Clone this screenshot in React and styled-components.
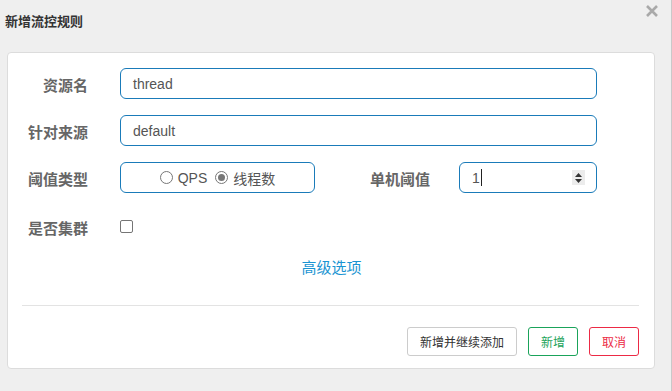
import React from 'react'
import styled, { createGlobalStyle } from 'styled-components'

const GlobalStyle = createGlobalStyle`
  html, body {
    margin: 0;
    padding: 0;
    background: #efefef;
  }
  body {
    font-family: "Liberation Sans", "Noto Sans CJK SC", sans-serif;
  }
`

const Page = styled.div`
  width: 671px;
  height: 391px;
  background: #efefef;
  border-right: 1px solid #c9c9c9;
  position: relative;
  overflow: hidden;
`

const Header = styled.div`
  height: 52px;
  display: flex;
  align-items: center;
  padding: 0 5px;
  box-sizing: border-box;
`

const Title = styled.h4`
  margin: 0;
  margin-top: -11px;
  font-size: 13px;
  font-weight: bold;
  color: #333;
`

const Close = styled.button`
  position: absolute;
  top: 4px;
  right: 12px;
  width: 14px;
  height: 14px;
  padding: 0;
  border: 0;
  background: none;
  display: flex;
  align-items: center;
  justify-content: center;
`

const Panel = styled.div`
  margin: 0 16px 0 7px;
  background: #fff;
  border: 1px solid #dcdcdc;
  border-radius: 4px;
  padding: 15px 15px 14px 14px;
  height: 317px;
  box-sizing: border-box;
  display: flex;
  flex-direction: column;
`

const Form = styled.div`
  display: flex;
  flex-direction: column;
  gap: 16px;
`

const Row = styled.div`
  display: flex;
  align-items: flex-start;
  height: 31px;
  margin-top: ${p => p.$shift || 0}px;
`

const Label = styled.label`
  width: ${p => p.$width || 66}px;
  margin-right: ${p => p.$gap || 32}px;
  text-align: right;
  padding-top: 8px;
  font-size: 15px;
  line-height: 20px;
  font-weight: bold;
  color: #666;
  flex-shrink: 0;
`

const Field = styled.div`
  width: ${p => p.$width}px;
  height: 31px;
  box-sizing: border-box;
  border: 1px solid #1a7bb9;
  border-radius: 6px;
  display: flex;
  align-items: center;
  padding: 0 12px;
  font-size: 14px;
  color: #555;
  font-family: "Liberation Sans", "Noto Sans CJK SC", sans-serif;
  justify-content: ${p => (p.$center ? 'center' : 'flex-start')};
  gap: 8px;
`

const Value = styled.span`
  display: flex;
  align-items: center;
`

const Cursor = styled.span`
  display: inline-block;
  width: 1px;
  height: 17px;
  background: #222;
  margin-left: 1px;
`

const Spinner = styled.span`
  margin-left: auto;
  margin-right: -1px;
  width: 13px;
  height: 15px;
  background: #ececec;
  display: flex;
  align-items: center;
  justify-content: center;
`

const Option = styled.span`
  display: flex;
  align-items: center;
  gap: 5px;
  font-size: 14px;
  color: #555;
`

const Radio = styled.span`
  width: 11px;
  height: 11px;
  border-radius: 50%;
  border: 1px solid #777;
  display: flex;
  align-items: center;
  justify-content: center;
  &::after {
    content: '';
    width: 7px;
    height: 7px;
    border-radius: 50%;
    background: ${p => (p.$checked ? '#777' : 'transparent')};
  }
`

const Checkbox = styled.span`
  width: 11px;
  height: 11px;
  margin-top: 9px;
  border: 1px solid #757575;
  border-radius: 2px;
`

const Advanced = styled.a`
  align-self: center;
  margin: 16px 0 0 2px;
  font-size: 15px;
  line-height: 20px;
  color: #1a94d2;
  text-decoration: none;
`

const Divider = styled.hr`
  border: 0;
  border-top: 1px solid #e3e3e3;
  margin: 27px 0 0 0;
`

const Footer = styled.div`
  display: flex;
  justify-content: flex-end;
  gap: 11px;
  margin-top: 21px;
`

const Button = styled.button`
  height: 29px;
  padding: 0 12px;
  background: #fff;
  border: 1px solid ${p => p.$color || '#ccc'};
  color: ${p => p.$text || '#333'};
  border-radius: 3px;
  font-size: 12px;
  font-family: "Liberation Sans", "Noto Sans CJK SC", sans-serif;
  min-width: 50px;
`

export default function App() {
  return (
    <>
      <GlobalStyle />
      <Page>
        <Header>
          <Title>新增流控规则</Title>
        </Header>
        <Close aria-label="close">
          <svg width="12" height="12" viewBox="0 0 12 12">
            <path d="M1 1L11 11M11 1L1 11" stroke="#a9a9a9" strokeWidth="2.6" />
          </svg>
        </Close>
        <Panel>
          <Form>
            <Row>
              <Label>资源名</Label>
              <Field $width={477}>thread</Field>
            </Row>
            <Row>
              <Label>针对来源</Label>
              <Field $width={477}>default</Field>
            </Row>
            <Row>
              <Label>阈值类型</Label>
              <Field $width={195} $center>
                <Option>
                  <Radio />
                  QPS
                </Option>
                <Option>
                  <Radio $checked />
                  线程数
                </Option>
              </Field>
              <Label $width={115} $gap={29}>单机阈值</Label>
              <Field $width={138}>
                <Value>
                  1<Cursor />
                </Value>
                <Spinner>
                  <svg width="9" height="12" viewBox="0 0 9 12">
                    <path d="M4.5 1L8 5H1Z M4.5 11L8 7H1Z" fill="#333" />
                  </svg>
                </Spinner>
              </Field>
            </Row>
            <Row $shift={2}>
              <Label>是否集群</Label>
              <Checkbox />
            </Row>
          </Form>
          <Advanced href="#">高级选项</Advanced>
          <Divider />
          <Footer>
            <Button>新增并继续添加</Button>
            <Button $color="#1aa35a" $text="#1aa35a">新增</Button>
            <Button $color="#ec2a45" $text="#ec2a45">取消</Button>
          </Footer>
        </Panel>
      </Page>
    </>
  )
}
